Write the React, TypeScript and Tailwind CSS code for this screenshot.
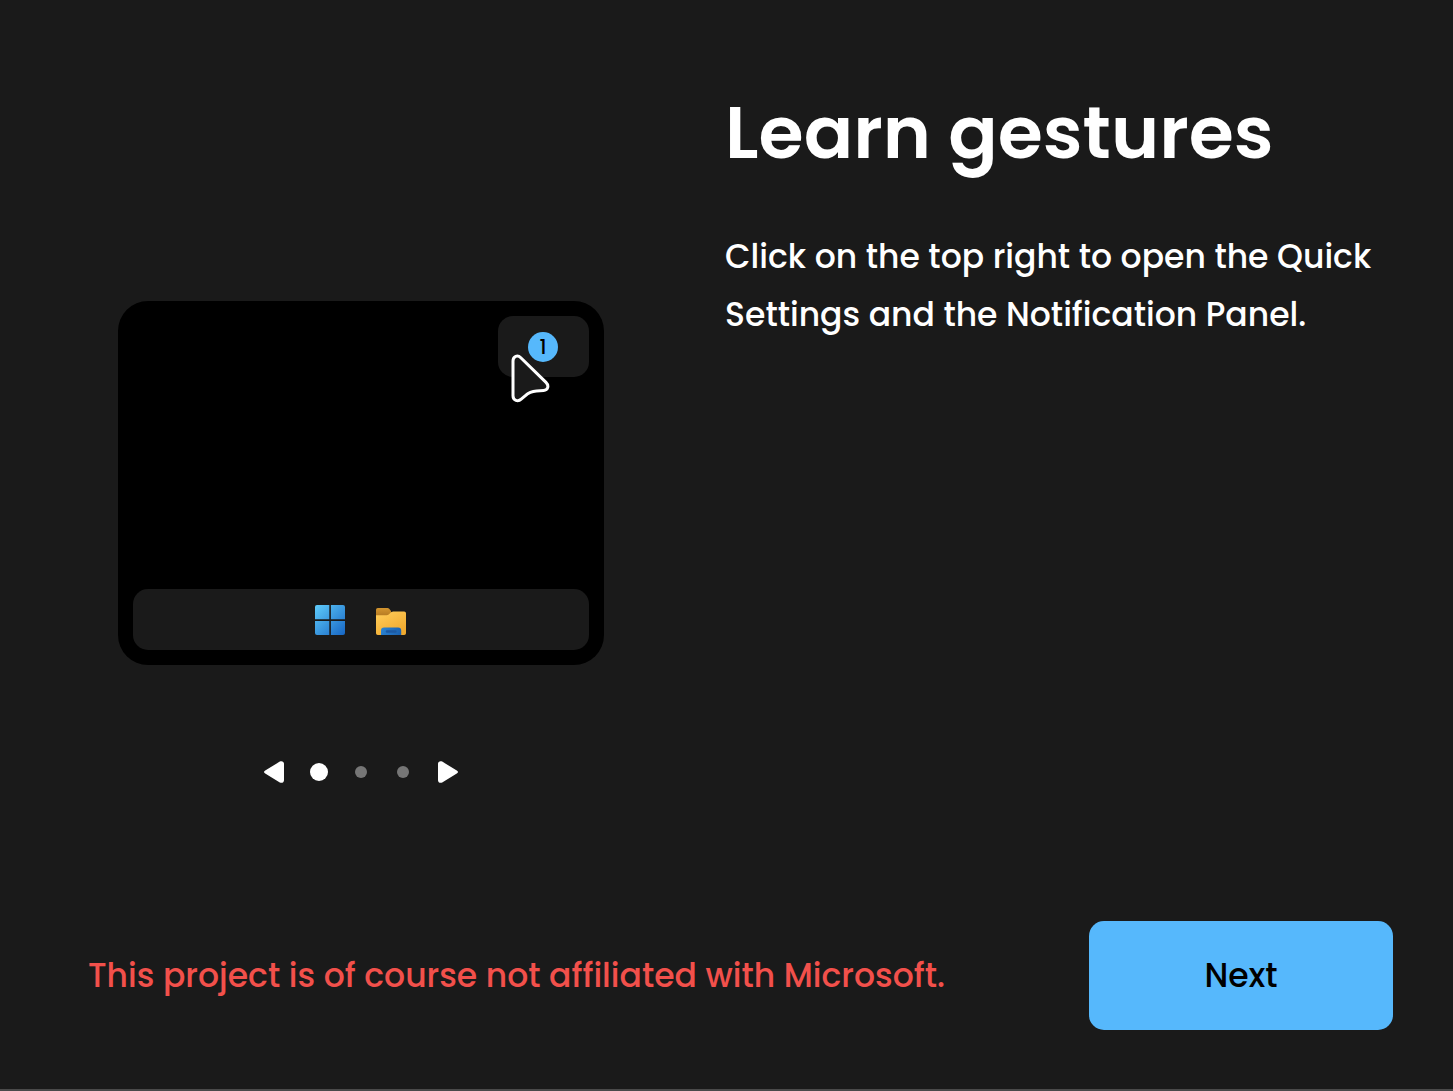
import { useState } from "react";
import clsx from "clsx";

const pages = ["Quick Settings", "Taskbar", "Windows"];

function WindowsLogo() {
  return (
    <svg viewBox="0 0 30 30" className="size-[30px]" aria-hidden="true">
      <defs>
        <linearGradient id="win" x1="0" y1="0" x2="30" y2="30" gradientUnits="userSpaceOnUse">
          <stop offset="0" stopColor="#5fccfb" />
          <stop offset="1" stopColor="#1766c4" />
        </linearGradient>
      </defs>
      <g fill="url(#win)">
        <path d="M2 0H14.3V14.3H0V2A2 2 0 0 1 2 0Z" />
        <path d="M15.9 0H28A2 2 0 0 1 30 2V14.3H15.9Z" />
        <path d="M0 15.9H14.3V30H2A2 2 0 0 1 0 28Z" />
        <path d="M15.9 15.9H30V28A2 2 0 0 1 28 30H15.9Z" />
      </g>
    </svg>
  );
}

function FolderIcon() {
  return (
    <svg viewBox="0 0 30 30" className="size-[30px]" aria-hidden="true">
      <defs>
        <linearGradient id="folder" x1="8" y1="6" x2="20" y2="30" gradientUnits="userSpaceOnUse">
          <stop offset="0" stopColor="#ffcb57" />
          <stop offset="1" stopColor="#f0a92e" />
        </linearGradient>
        <linearGradient id="tab" x1="0" y1="3" x2="0" y2="11" gradientUnits="userSpaceOnUse">
          <stop offset="0" stopColor="#d3952f" />
          <stop offset="1" stopColor="#b57a22" />
        </linearGradient>
        <linearGradient id="tray" x1="5" y1="22" x2="25" y2="30" gradientUnits="userSpaceOnUse">
          <stop offset="0" stopColor="#2b85d3" />
          <stop offset="1" stopColor="#1a5fae" />
        </linearGradient>
      </defs>
      <path d="M0 4.8A1.8 1.8 0 0 1 1.8 3H11.5Q12.5 3 13.2 3.8L15 6V11H0Z" fill="url(#tab)" />
      <path
        d="M0 10.2H10.6Q11.8 10.2 12.7 9.4L15.4 7.1Q16.2 6.5 17.2 6.5H28.2A1.8 1.8 0 0 1 30 8.3V28.2A1.8 1.8 0 0 1 28.2 30H1.8A1.8 1.8 0 0 1 0 28.2Z"
        fill="url(#folder)"
      />
      <path d="M5 30V25.5A3 3 0 0 1 8 22.5H22.2A3 3 0 0 1 25.2 25.5V30Z" fill="url(#tray)" />
      <rect x="9.8" y="25.2" width="10.8" height="2.6" rx="1.3" fill="#1c59a3" />
    </svg>
  );
}

function Cursor() {
  return (
    <svg viewBox="0 0 40 50" className="absolute top-[38px] left-[13px] h-[50px] w-10" aria-hidden="true">
      <path
        d="M2 7C2 2.2 6.6 .6 9.8 3.8L35 28.4C38.4 31.8 36.8 36.3 32.6 36.6L25.5 37C20 37.3 17.5 38.6 14.4 41.6L10.2 45.2C7 48.2 2 46.6 2 41.8Z"
        fill="#1a1a1a"
        stroke="#fff"
        strokeWidth="3"
        strokeLinejoin="round"
      />
    </svg>
  );
}

function Arrow({ className }: { className?: string }) {
  return (
    <svg viewBox="0 0 20 22" className={clsx("h-[22px] w-5", className)} aria-hidden="true">
      <path
        d="M1.2 9.4L15.8 .6C17.8 -.5 20 .6 20 2.8V19.2C20 21.4 17.8 22.5 15.8 21.4L1.2 12.6C-.4 11.7 -.4 10.3 1.2 9.4Z"
        fill="currentColor"
      />
    </svg>
  );
}

function Preview() {
  return (
    <div className="flex h-[364px] w-full max-w-[486px] flex-col items-end justify-between rounded-[30px] bg-black p-[15px]">
      <div className="relative flex h-[61px] w-[91px] items-center justify-center rounded-[15px] bg-[#1a1a1a]">
        <span className="flex size-[30px] items-center justify-center rounded-full bg-[#56b8fc] text-xl font-medium text-black">
          1
        </span>
        <Cursor />
      </div>
      <div className="flex h-[61px] w-full items-center justify-center gap-[31px] rounded-[15px] bg-[#1a1a1a]">
        <WindowsLogo />
        <FolderIcon />
      </div>
    </div>
  );
}

export default function App() {
  const [page, setPage] = useState(0);

  return (
    <div className="flex min-h-screen flex-col border-b-2 border-[#4a4a4a] bg-[#1a1a1a] font-[Poppins,Inter,sans-serif] text-white">
      <main className="grid flex-1 grid-cols-[9fr_10fr] gap-16 px-[60px] pt-20">
        <section className="flex flex-col items-center gap-24 pt-[221px]">
          <Preview />
          <div className="flex h-[22px] items-center">
            <button
              type="button"
              aria-label="Previous"
              className="flex w-12 justify-center"
              onClick={() => setPage(Math.max(0, page - 1))}
            >
              <Arrow />
            </button>
            {pages.map((name, i) => (
              <button
                key={name}
                type="button"
                aria-label={name}
                className="flex w-[42px] justify-center"
                onClick={() => setPage(i)}
              >
                <span className={clsx("rounded-full", i === page ? "size-[18px] bg-white" : "size-3 bg-[#767676]")} />
              </button>
            ))}
            <button
              type="button"
              aria-label="Following"
              className="flex w-12 justify-center"
              onClick={() => setPage(Math.min(pages.length - 1, page + 1))}
            >
              <Arrow className="rotate-180" />
            </button>
          </div>
        </section>

        <section>
          <h1 className="text-[73px] leading-[106px] font-semibold">Learn gestures</h1>
          <p className="mt-[42px] text-[33px] leading-[58px] font-medium">
            Click on the top right to open the Quick Settings and the Notification Panel.
          </p>
        </section>
      </main>

      <footer className="flex items-center justify-between pr-[60px] pb-[59px] pl-[88px]">
        <p className="text-[33px] leading-[60px] font-medium text-[#f2504b]">
          This project is of course not affiliated with Microsoft.
        </p>
        <button
          type="button"
          className="h-[109px] w-[304px] rounded-[15px] bg-[#56b8fc] text-[33px] font-medium text-black"
        >
          Next
        </button>
      </footer>
    </div>
  );
}
